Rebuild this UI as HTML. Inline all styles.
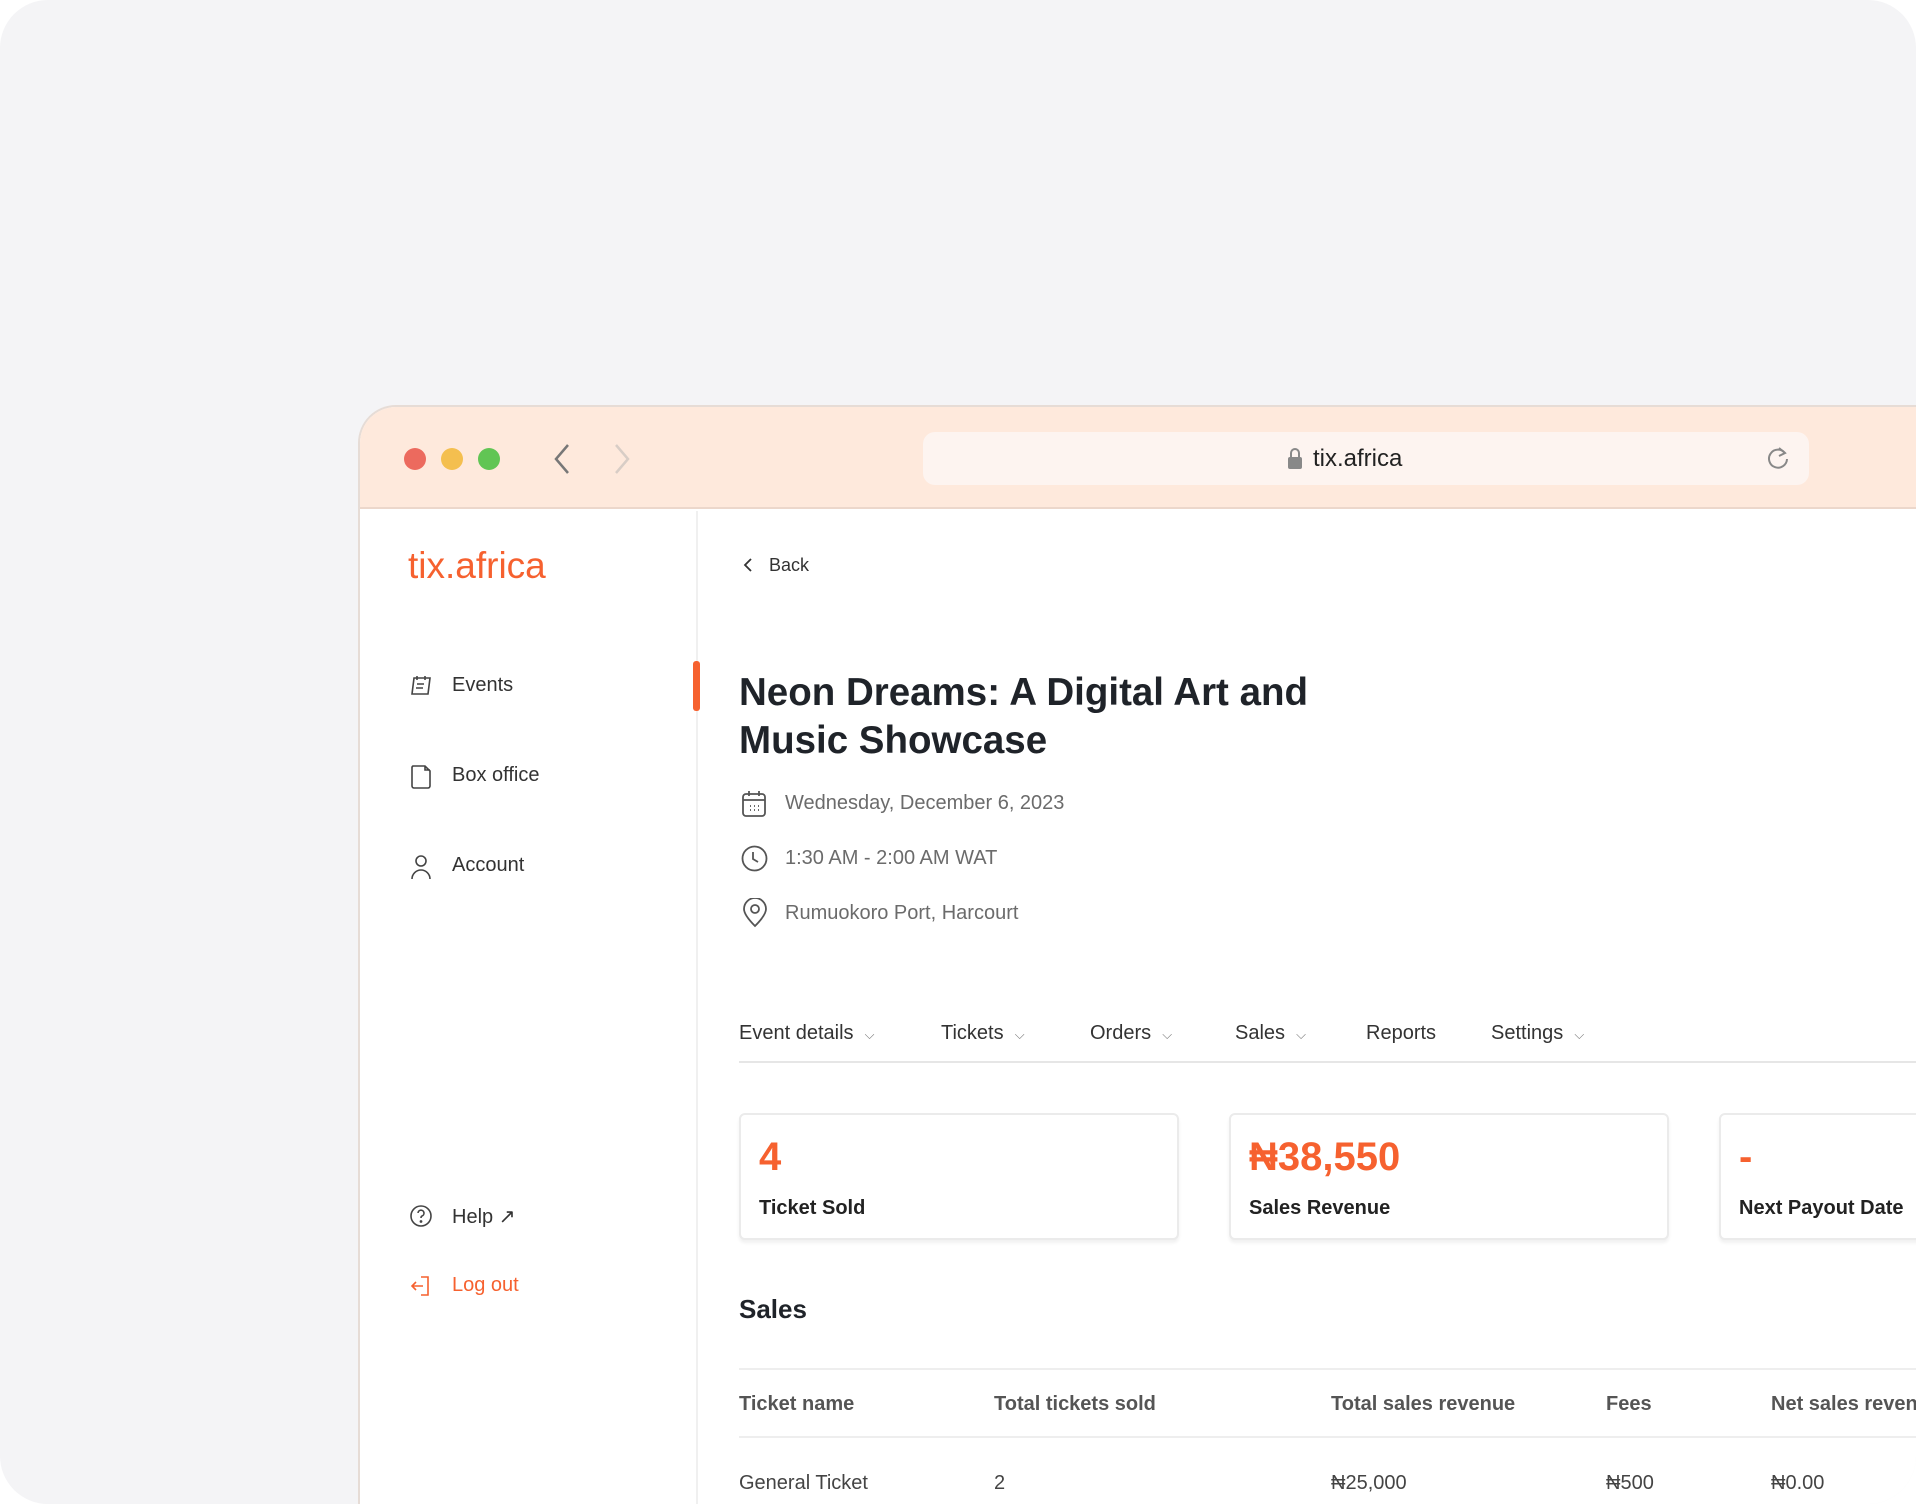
<!DOCTYPE html>
<html><head><meta charset="utf-8"><style>
*{margin:0;padding:0;box-sizing:border-box}
html,body{width:1916px;height:1504px;overflow:hidden;background:#fff}
body{font-family:"Liberation Sans",sans-serif;position:relative}
.page{position:absolute;left:0;top:0;width:1916px;height:1504px;background:#f4f4f6;border-radius:48px;overflow:hidden}
.win{position:absolute;left:358px;top:405px;width:1558px;height:1099px;background:#fff;border:2px solid #e6dcd6;border-right:none;border-bottom:none;border-radius:38px 0 0 0;overflow:hidden}
.bar{position:absolute;left:0;top:0;right:0;height:102px;background:#fee9dc;border-bottom:2px solid #ecd7cb}
.dot{position:absolute;top:41px;width:22px;height:22px;border-radius:50%}
.url{position:absolute;left:563px;top:25px;width:886px;height:53px;background:#fdf4f0;border-radius:12px}
.url span{position:absolute;left:390px;top:13px;font-size:24px;color:#222}
.side{position:absolute;left:0;top:104px;width:338px;bottom:0;border-right:2px solid #f0f0f0}
.abs{position:absolute;white-space:nowrap}
.nav{font-size:20px;color:#333}
.ico{position:absolute}
.orange{color:#f6612f}
.info{font-size:20px;color:#6b6b6b}
.tab{font-size:20px;color:#333;top:1022px}
.card{position:absolute;top:1113px;width:440px;height:127px;border:2px solid #ebebeb;border-radius:6px;box-shadow:0 3px 3px rgba(0,0,0,0.06);background:#fff}
.card .n{position:absolute;left:18px;top:20px;font-size:40px;font-weight:bold;color:#f6612f}
.card .l{position:absolute;left:18px;top:82px;font-size:20px;font-weight:bold;color:#222}
.th{font-size:20px;color:#555;font-weight:bold;top:1393px}
.td{font-size:20px;color:#444;top:1472px}
.chev{font-size:13px;color:#777}
</style></head><body><div class="page">
<div class="win">
 <div class="bar">
  <div class="dot" style="left:44px;background:#ec6a5e"></div>
  <div class="dot" style="left:81px;background:#f4bf4f"></div>
  <div class="dot" style="left:118px;background:#61c554"></div>
  <svg class="ico" style="left:190px;top:36px" width="24" height="32" viewBox="0 0 24 32"><path d="M18 2 L6 16 L18 30" fill="none" stroke="#777" stroke-width="2.5"/></svg>
  <svg class="ico" style="left:250px;top:36px" width="24" height="32" viewBox="0 0 24 32"><path d="M6 2 L18 16 L6 30" fill="none" stroke="#d8cdc6" stroke-width="2.5"/></svg>
  <div class="url">
   <svg class="ico" style="left:365px;top:15px" width="14" height="22" viewBox="0 0 14 22"><path d="M3 10 V6 a4 4 0 0 1 8 0 V10" fill="none" stroke="#888" stroke-width="2"/><rect x="0" y="10" width="14" height="12" rx="2" fill="#888"/></svg>
   <span>tix.africa</span>
   <svg class="ico" style="left:842px;top:13px" width="26" height="26" viewBox="0 0 26 26"><path d="M20 8 A9 9 0 1 0 22 14" fill="none" stroke="#888" stroke-width="2"/><path d="M14 3 L20 8 L14 11" fill="none" stroke="#888" stroke-width="2"/></svg>
  </div>
 </div>
 <div class="side">
  <div class="abs orange" style="left:48px;top:34px;font-size:37px">tix.africa</div>
  <div style="position:absolute;left:333px;top:150px;width:7px;height:50px;background:#f6612f;border-radius:3px"></div>
  <svg class="ico" style="left:49px;top:163px" width="24" height="24" viewBox="0 0 24 24" fill="none" stroke="#444" stroke-width="1.6"><path d="M5 4 H21 L19 20 H3 Z"/><path d="M8 2 V6 M16 2 V6 M8 10 H15 M7 14 H14"/></svg>
  <div class="abs nav" style="left:92px;top:163px">Events</div>
  <svg class="ico" style="left:49px;top:253px" width="24" height="26" viewBox="0 0 24 26" fill="none" stroke="#444" stroke-width="1.6"><path d="M4 2 H16 L21 7 V22 a2 2 0 0 1 -2 2 H5 a2 2 0 0 1 -2 -2 V4 a2 2 0 0 1 1 -2 Z M16 2 V6 H21"/></svg>
  <div class="abs nav" style="left:92px;top:253px">Box office</div>
  <svg class="ico" style="left:49px;top:343px" width="24" height="26" viewBox="0 0 24 26" fill="none" stroke="#444" stroke-width="1.6"><circle cx="12" cy="7" r="5"/><path d="M3 25 a9 9 0 0 1 18 0"/></svg>
  <div class="abs nav" style="left:92px;top:343px">Account</div>
  <svg class="ico" style="left:49px;top:693px" width="24" height="24" viewBox="0 0 24 24" fill="none" stroke="#444" stroke-width="1.6"><circle cx="12" cy="12" r="10"/><path d="M9 9 a3 3 0 1 1 4 3 c-1 .5 -1 1 -1 2"/><circle cx="12" cy="17.5" r=".6" fill="#444"/></svg>
  <div class="abs nav" style="left:92px;top:693px">Help ↗</div>
  <svg class="ico" style="left:49px;top:763px" width="24" height="24" viewBox="0 0 24 24" fill="none" stroke="#f6612f" stroke-width="1.6"><path d="M12 3 H19 V21 H12"/><path d="M14 12 H3 M7 8 L3 12 L7 16"/></svg>
  <div class="abs nav orange" style="left:92px;top:763px">Log out</div>
 </div>
</div>
<svg class="ico" style="left:742px;top:557px" width="12" height="16" viewBox="0 0 12 16"><path d="M9 2 L3 8 L9 14" fill="none" stroke="#333" stroke-width="1.8"/></svg>
<div class="abs" style="left:769px;top:555px;font-size:18px;color:#333">Back</div>
<div class="abs" style="left:739px;top:669px;font-size:38.5px;font-weight:bold;color:#1f2329;line-height:48px">Neon Dreams: A Digital Art and<br>Music Showcase</div>
<svg class="ico" style="left:741px;top:790px" width="26" height="28" viewBox="0 0 26 28" fill="none" stroke="#555" stroke-width="1.8"><rect x="2" y="4" width="22" height="22" rx="3"/><path d="M2 10 H24 M8 1 V6 M18 1 V6"/><path d="M9 16 h1 M13 16 h1 M17 16 h1 M9 20 h1 M13 20 h1 M17 20 h1"/></svg>
<div class="abs info" style="left:785px;top:792px">Wednesday, December 6, 2023</div>
<svg class="ico" style="left:741px;top:845px" width="27" height="27" viewBox="0 0 27 27" fill="none" stroke="#555" stroke-width="1.8"><circle cx="13.5" cy="13.5" r="12"/><path d="M12 7 V14 L17 17"/></svg>
<div class="abs info" style="left:785px;top:847px">1:30 AM - 2:00 AM WAT</div>
<svg class="ico" style="left:742px;top:898px" width="26" height="30" viewBox="0 0 26 30" fill="none" stroke="#555" stroke-width="1.8"><path d="M13 28 C5 20 2 15 2 11 a11 11 0 0 1 22 0 c0 4 -3 9 -11 17 Z"/><circle cx="13" cy="11" r="4"/></svg>
<div class="abs info" style="left:785px;top:902px">Rumuokoro Port, Harcourt</div>

<div class="abs tab" style="left:739px">Event details &nbsp;<span class="chev">⌵</span></div>
<div class="abs tab" style="left:941px">Tickets &nbsp;<span class="chev">⌵</span></div>
<div class="abs tab" style="left:1090px">Orders &nbsp;<span class="chev">⌵</span></div>
<div class="abs tab orange" style="left:1235px">Sales &nbsp;<span class="chev">⌵</span></div>
<div class="abs tab" style="left:1366px">Reports</div>
<div class="abs tab" style="left:1491px">Settings &nbsp;<span class="chev">⌵</span></div>
<div style="position:absolute;left:739px;top:1061px;width:1177px;height:2px;background:#e6e6e6"></div>

<div class="card" style="left:739px"><div class="n">4</div><div class="l">Ticket Sold</div></div>
<div class="card" style="left:1229px"><div class="n">₦38,550</div><div class="l">Sales Revenue</div></div>
<div class="card" style="left:1719px"><div class="n">-</div><div class="l">Next Payout Date</div></div>

<div class="abs" style="left:739px;top:1294px;font-size:26px;font-weight:bold;color:#1f2329">Sales</div>
<div style="position:absolute;left:739px;top:1368px;width:1177px;height:2px;background:#eee"></div>
<div class="abs th" style="left:739px">Ticket name</div>
<div class="abs th" style="left:994px">Total tickets sold</div>
<div class="abs th" style="left:1331px">Total sales revenue</div>
<div class="abs th" style="left:1606px">Fees</div>
<div class="abs th" style="left:1771px">Net sales revenue</div>
<div style="position:absolute;left:739px;top:1436px;width:1177px;height:2px;background:#eee"></div>
<div class="abs td" style="left:739px">General Ticket</div>
<div class="abs td" style="left:994px">2</div>
<div class="abs td" style="left:1331px">₦25,000</div>
<div class="abs td" style="left:1606px">₦500</div>
<div class="abs td" style="left:1771px">₦0.00</div>
</div></body></html>
